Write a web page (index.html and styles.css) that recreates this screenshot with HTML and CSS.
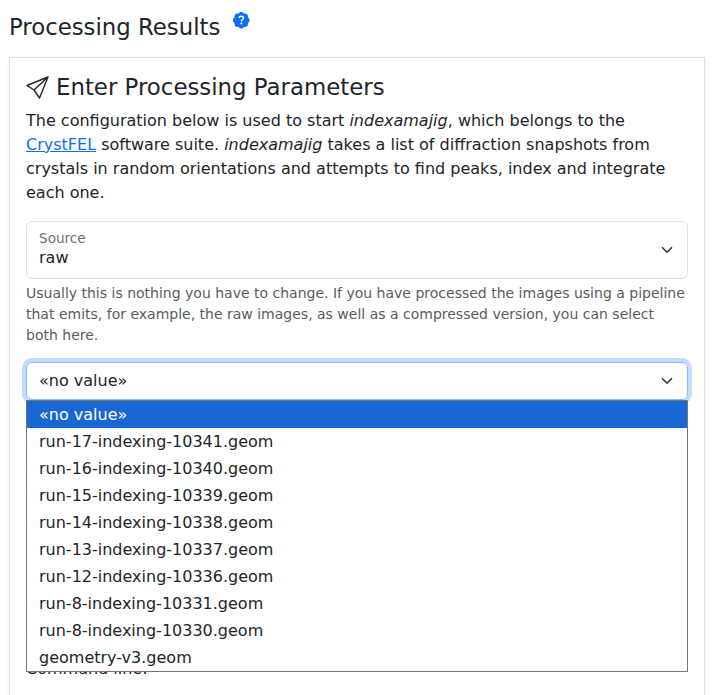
FILE: index.html
```html
<!DOCTYPE html>
<html lang="en">
<head>
<meta charset="utf-8">
<title>Processing Results</title>
<link rel="stylesheet" href="styles.css">
</head>
<body>
<header class="page-head">
  <h1>Processing Results</h1>
  <svg class="help" viewBox="0 0 16 16"><path fill="#0d6efd" d="M5.933.87a2.89 2.89 0 0 1 4.134 0l.622.638.89-.011a2.89 2.89 0 0 1 2.924 2.924l-.01.89.636.622a2.89 2.89 0 0 1 0 4.134l-.637.622.011.89a2.89 2.89 0 0 1-2.924 2.924l-.89-.01-.622.636a2.89 2.89 0 0 1-4.134 0l-.622-.637-.89.011a2.89 2.89 0 0 1-2.924-2.924l.01-.89-.636-.622a2.89 2.89 0 0 1 0-4.134l.637-.622-.011-.89a2.89 2.89 0 0 1 2.924-2.924l.89.01z"/><path d="M6 5.900c0-2.400 4.200-2.300 4.200-.1 0 1.500-2.100 1.500-2.100 3.300" fill="none" stroke="#fff" stroke-width="1.500"/><circle cx="8.100" cy="11.100" r="1" fill="#fff"/></svg>
</header>
<main class="card">
  <h2><svg class="send" viewBox="0 0 23 23"><path d="M22 1 1 9.500l7 4.500 5.500 8L22 1 8 14"/></svg><span>Enter Processing Parameters</span></h2>
  <p class="intro">The configuration below is used to start <em>indexamajig</em>, which belongs to the <a href="#">CrystFEL</a> software suite. <em>indexamajig</em> takes a list of diffraction snapshots from crystals in random orientations and attempts to find peaks, index and integrate each one.</p>
  <div class="source">
    <div class="source-text"><span class="label">Source</span><span class="value">raw</span></div>
    <svg class="chevron" viewBox="0 0 16 16"><path d="m2 5 6 6 6-6"/></svg>
  </div>
  <p class="hint">Usually this is nothing you have to change. If you have processed the images using a pipeline that emits, for example, the raw images, as well as a compressed version, you can select both here.</p>
  <div class="select">
    <span>«no value»</span>
    <svg class="chevron" viewBox="0 0 16 16"><path d="m2 5 6 6 6-6"/></svg>
    <ul class="menu">
      <li class="active">«no value»</li>
      <li>run-17-indexing-10341.geom</li>
      <li>run-16-indexing-10340.geom</li>
      <li>run-15-indexing-10339.geom</li>
      <li>run-14-indexing-10338.geom</li>
      <li>run-13-indexing-10337.geom</li>
      <li>run-12-indexing-10336.geom</li>
      <li>run-8-indexing-10331.geom</li>
      <li>run-8-indexing-10330.geom</li>
      <li>geometry-v3.geom</li>
    </ul>
  </div>
  <p class="command">Command line:</p>
</main>
</body>
</html>
```
FILE: styles.css
```css
* { box-sizing: border-box; }
body {
  margin: 0;
  height: 695px;
  overflow: hidden;
  padding: 0 12px 0 9px;
  background: #fff;
  color: #212529;
  font: 16px/24px "DejaVu Sans", sans-serif;
}
h1, h2, p, ul { margin: 0; padding: 0; font-weight: 400; }
.page-head { display: flex; height: 57px; padding-top: 12px; gap: 13px; }
h1 { font-size: 22.8px; line-height: 30px; }
.help { width: 16.500px; height: 16.500px; }
.card {
  height: 638px;
  padding: 15px 16px 0;
  border: 1px solid #dee2e6;
  border-bottom: 0;
  box-shadow: 0 2px 4px rgba(0, 0, 0, .075);
}
h2 { display: flex; align-items: center; gap: 7px; height: 28px; font-size: 22.85px; line-height: 28px; }
.send { width: 23px; height: 23px; fill: none; stroke: currentColor; stroke-width: 1.400; stroke-linejoin: round; }
.intro { margin-top: 8px; }
a { color: #0d6efd; }
.source, .select {
  position: relative;
  display: flex;
  align-items: center;
  justify-content: space-between;
  border: 1px solid #dee2e6;
  border-radius: 6px;
  padding: 0 12px;
}
.source { height: 58px; margin-top: 16px; }
.source-text { padding-bottom: 4px; }
.label, .value { display: block; }
.label { font-size: 13.6px; line-height: 20px; color: #6c6f73; }
.value { line-height: 20px; }
.chevron { width: 16px; height: 12px; fill: none; stroke: #343a40; stroke-width: 2.200; stroke-linecap: round; stroke-linejoin: round; }
.hint { margin-top: 4px; font-size: 14px; line-height: 21px; color: #595c5f; }
.select { height: 38px; margin-top: 16px; border-color: #86b7fe; box-shadow: 0 0 0 4px #c2dbfe; }
.menu {
  position: absolute;
  top: 37px;
  left: -1px;
  right: -1px;
  border: 1px solid #767676;
  background: #fff;
  list-style: none;
}
.menu li { height: 27px; padding-left: 12px; line-height: 27px; }
.menu .active { background: #1967d2; color: #fff; }
.command { margin-top: 257px; }
```
